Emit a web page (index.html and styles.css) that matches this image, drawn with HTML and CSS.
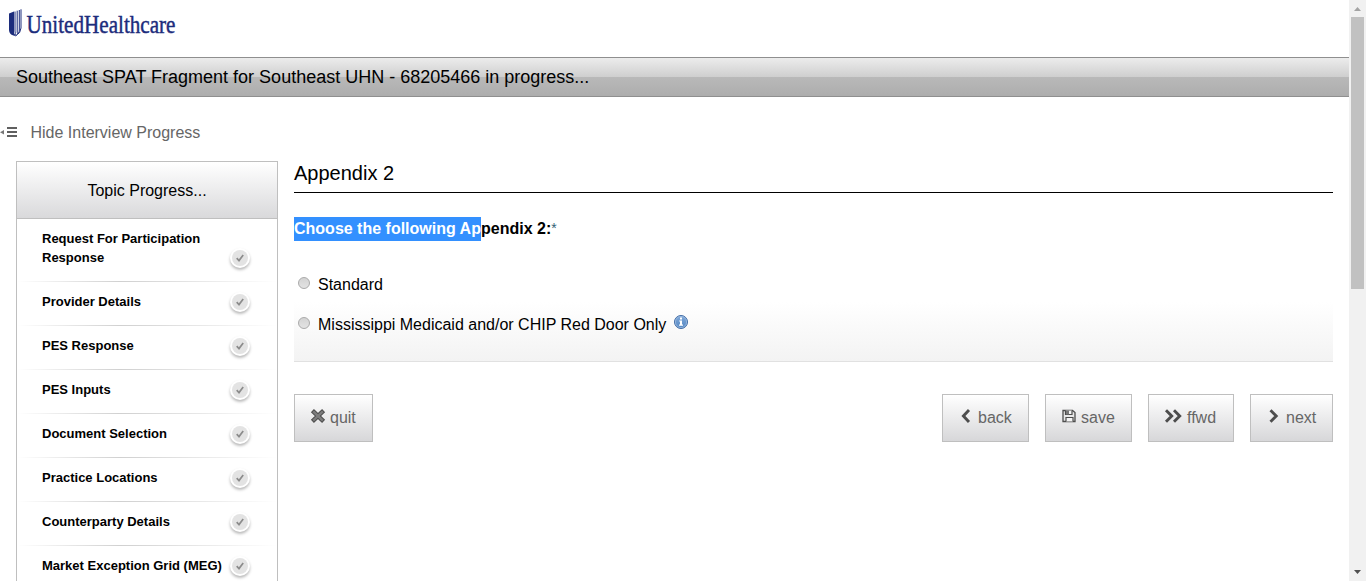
FILE: index.html
```html
<!DOCTYPE html>
<html lang="en">
<head>
<meta charset="utf-8">
<title>UnitedHealthcare</title>
<link rel="stylesheet" href="styles.css">
</head>
<body>
<svg class="defs" width="0" height="0">
  <symbol id="check" viewBox="0 0 20 20">
    <circle cx="10" cy="10" r="8" fill="#e3e3e3"/>
    <path d="M6.700 10.200l2.300 2.400 4.200-5.600" fill="none" stroke="#8c8c8c" stroke-width="1.700"/>
  </symbol>
</svg>
<div class="window">
  <div class="page">
    <header class="brand">
      <svg width="240" height="57" viewBox="0 0 240 57">
        <path d="M9 13.500L14 11.500V33.300L16 36C11 35.500 9 33 9 29.500Z" fill="#1c2c7c"/>
        <path d="M15 11.500V31Q15 34 16.300 35.500M17.200 10.700V31Q17 33 18 34M19.300 10V30Q19.300 32 18.500 33M21 9.300V28Q21 33 15.500 36" fill="none" stroke="#1c2c7c" stroke-width="1"/>
        <text class="wordmark" x="26.500" y="33" textLength="149" lengthAdjust="spacingAndGlyphs">UnitedHealthcare</text>
      </svg>
    </header>
    <h1 class="titlebar">Southeast SPAT Fragment for Southeast UHN - 68205466 in progress...</h1>
    <div class="toggle">
      <svg width="18" height="14" viewBox="0 0 18 14"><path d="M0 6.200L4 4V8.500Z" fill="#777"/><path d="M7 1h10v2H7zM7 5h10v2H7zM7 9h10v2H7z" fill="#606060"/></svg>
      <span>Hide Interview Progress</span>
    </div>
    <div class="columns">
      <aside class="topics">
        <h2>Topic Progress...</h2>
        <ul>
          <li><span>Request For Participation Response</span><svg class="tick"><use href="#check"/></svg></li>
          <li><span>Provider Details</span><svg class="tick"><use href="#check"/></svg></li>
          <li><span>PES Response</span><svg class="tick"><use href="#check"/></svg></li>
          <li><span>PES Inputs</span><svg class="tick"><use href="#check"/></svg></li>
          <li><span>Document Selection</span><svg class="tick"><use href="#check"/></svg></li>
          <li><span>Practice Locations</span><svg class="tick"><use href="#check"/></svg></li>
          <li><span>Counterparty Details</span><svg class="tick"><use href="#check"/></svg></li>
          <li><span>Market Exception Grid (MEG)</span><svg class="tick"><use href="#check"/></svg></li>
        </ul>
      </aside>
      <main class="form">
        <h2>Appendix 2</h2>
        <div class="question">
          <p class="prompt"><mark>Choose the following Ap</mark><b>pendix 2:</b><i>*</i></p>
          <label class="option"><span class="radio"></span><span>Standard</span></label>
          <label class="option"><span class="radio"></span><span>Mississippi Medicaid and/or CHIP Red Door Only</span>
            <svg class="info" width="16" height="16" viewBox="0 0 16 16"><defs><linearGradient id="blue" x2="0" y2="1"><stop stop-color="#80a9da"/><stop offset="1" stop-color="#5386c2"/></linearGradient></defs><circle cx="8" cy="8" r="6.500" fill="url(#blue)" stroke="#426ca5"/><circle cx="8" cy="8" r="5.600" fill="none" stroke="#a3c0e3" stroke-width=".7"/><path d="M7 3.500h2v2H7zM6.200 6.500H9v4h1v1.200H6V10.500h1v-3h-.8z" fill="#fff"/></svg>
          </label>
        </div>
        <div class="actions">
          <button class="btn quit"><svg width="16" height="16" viewBox="0 0 16 16"><path d="M4 4.200l8 7.600M12 4.200l-8 7.600" stroke="#4d4d4d" stroke-width="4.400" stroke-linecap="square"/><path d="M4 4.200l8 7.600M12 4.200l-8 7.600" stroke="#7d7d7d" stroke-width="2.400" stroke-linecap="square"/></svg>quit</button>
          <button class="btn back"><svg width="16" height="16" viewBox="0 0 16 16"><path d="M11 2L5.400 8l5.600 6" class="chev"/></svg>back</button>
          <button class="btn save"><svg width="16" height="16" viewBox="0 0 16 16"><path d="M2 2.500h9.500L14 4.500V13.500H2z" fill="#e8e8e8" stroke="#4d4d4d" stroke-width="1.300"/><path d="M4.500 2.500v4h6.500v-4M5 13.500V9.500h7V13.500" fill="#f5f5f5" stroke="#4d4d4d" stroke-width="1.200"/><path d="M5 2.500h3v4H5z" fill="#777"/></svg>save</button>
          <button class="btn ffwd"><svg width="19" height="16" viewBox="0 0 19 16"><path d="M2 2.300L7.700 8 2 13.700M10 2.300L15.700 8 10 13.700" class="chev"/></svg>ffwd</button>
          <button class="btn next"><svg width="16" height="16" viewBox="0 0 16 16"><path d="M4.500 2.300L10.200 8l-5.700 5.700" class="chev"/></svg>next</button>
        </div>
      </main>
    </div>
  </div>
  <div class="scrollbar">
    <svg width="17" height="17"><path d="M8.500 7L12 11H5z" fill="#a3a3a3"/></svg>
    <div class="thumb"></div>
    <svg class="down" width="17" height="17"><path d="M5 6h7L8.500 10z" fill="#505050"/></svg>
  </div>
</div>
</body>
</html>
```

FILE: styles.css
```css
* { box-sizing: border-box; }
body { margin: 0; overflow: hidden; background: #fff; color: #000; font: 16px "Liberation Sans", Arial, sans-serif; }
h1, h2, p, ul { margin: 0; padding: 0; font-weight: normal; }
.defs { position: absolute; }
.window { display: flex; height: 581px; overflow: hidden; }
.page { flex: 1; min-width: 0; overflow: hidden; }
.brand { height: 57px; }
.brand svg { display: block; overflow: visible; }
.wordmark { font: 25px "Liberation Serif", serif; fill: #1c2c7c; stroke: #1c2c7c; stroke-width: .45; }
.titlebar { height: 40px; padding-left: 16px; border: solid #8f8f8f; border-width: 1px 0; font-size: 18px; line-height: 38px; background: linear-gradient(#ececec, #cfcfcf 50%, #b9b9b9 50%, #adadad); }
.toggle { display: flex; align-items: center; height: 64px; padding-top: 7px; gap: 12.5px; color: #666; }
.columns { display: flex; gap: 16px; padding: 0 16px; }
.topics { width: 262px; height: 450px; flex: none; border: 1px solid #bfbfbf; }
.topics h2 { height: 57px; line-height: 57px; font-size: 16px; text-align: center; border-bottom: 1px solid #bfbfbf; background: linear-gradient(#fff, #d9d9db); }
.topics ul { list-style: none; }
.topics li { display: flex; justify-content: space-between; min-height: 44px; padding: 10px 25px 15px; font-weight: bold; font-size: 13px; line-height: 19px; background: linear-gradient(90deg, #fff, #d0d0d0 40%, #fff) bottom / 100% 1px no-repeat; }
.topics li span { width: 184px; }
.tick { align-self: flex-end; flex: none; width: 20px; height: 20px; margin: 0 2px -1px 0; border-radius: 50%; background: #fff; box-shadow: 0 2px 3px rgba(0,0,0,.28); }
.form { flex: 1; }
.form h2 { height: 32px; font-size: 20px; line-height: 24px; border-bottom: 1px solid #000; }
.question { height: 169px; padding-top: 24px; border-bottom: 1px solid #e1e1e1; background: linear-gradient(#fff 65%, #f3f3f3); }
.prompt { display: flex; height: 24px; margin-bottom: 24px; line-height: 24px; font-weight: bold; }
.prompt mark { width: 187px; white-space: nowrap; color: #fff; background: #3390ff; }
.prompt i { font: 14px/22px "Liberation Sans", sans-serif; color: #355f75; }
.option { display: flex; align-items: center; height: 40px; padding-left: 4px; }
.radio { width: 12px; height: 12px; margin: -4px 8px 0 0; border: 1px solid #aaa; border-radius: 50%; background: linear-gradient(#d3d3d3, #e3e3e3); }
.info { margin: -6px 0 0 7px; }
.actions { display: flex; gap: 16px; padding-top: 32px; }
.btn { display: flex; align-items: center; height: 48px; padding: 0 0 0 15px; border: 1px solid #bfbfbf; background: linear-gradient(#fff, #d7d7d9); color: #666; font: 16px "Liberation Sans", sans-serif; }
.btn svg { flex: none; margin: -4px 4px 0 0; }
.quit { width: 79px; margin-right: auto; }
.back { width: 87px; }
.save { width: 87px; }
.ffwd { width: 86px; }
.ffwd svg { margin-right: 4px; }
.next { width: 83px; }
.chev { fill: none; stroke: #4d4d4d; stroke-width: 2.9; }
.scrollbar { width: 17px; flex: none; display: flex; flex-direction: column; background: #f1f1f1; }
.thumb { width: 13px; height: 272px; margin-left: 2px; background: #c1c1c1; }
.down { margin-top: auto; }
```
